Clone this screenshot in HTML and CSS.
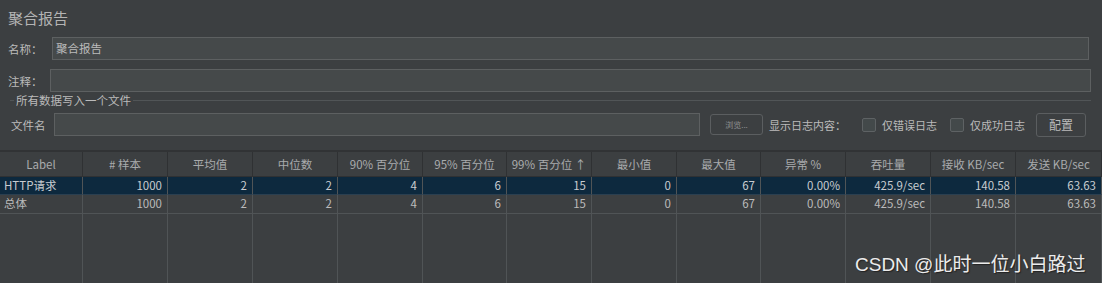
FILE: index.html
```html
<!DOCTYPE html>
<html lang="zh-CN">
<head>
    <meta charset="UTF-8">
    <title>聚合报告</title>
    <link rel="stylesheet" href="styles.css">
</head>
<body>
    <div class="panel">
        <div class="title">聚合报告</div>

        <div class="form-row name-row">
            <label>名称：</label>
            <div class="field">聚合报告</div>
        </div>
        <div class="form-row comment-row">
            <label>注释：</label>
            <div class="field"></div>
        </div>

        <!-- write results to file -->
        <div class="file-group">
            <div class="legend"><span>所有数据写入一个文件</span></div>
            <div class="file-row">
                <label>文件名</label>
                <div class="field file-field"></div>
                <button class="browse">浏览...</button>
                <span class="log-label">显示日志内容：</span>
                <span class="check err"><i></i>仅错误日志</span>
                <span class="check ok"><i></i>仅成功日志</span>
                <button class="config">配置</button>
            </div>
        </div>
    </div>

    <div class="table">
        <div class="th">Label</div>
        <div class="th"># 样本</div>
        <div class="th">平均值</div>
        <div class="th">中位数</div>
        <div class="th">90% 百分位</div>
        <div class="th">95% 百分位</div>
        <div class="th">99% 百分位 ↑</div>
        <div class="th">最小值</div>
        <div class="th">最大值</div>
        <div class="th">异常 %</div>
        <div class="th">吞吐量</div>
        <div class="th">接收 KB/sec</div>
        <div class="th">发送 KB/sec</div>

        <div class="td text selected">HTTP请求</div>
        <div class="td selected">1000</div>
        <div class="td selected">2</div>
        <div class="td selected">2</div>
        <div class="td selected">4</div>
        <div class="td selected">6</div>
        <div class="td selected">15</div>
        <div class="td selected">0</div>
        <div class="td selected">67</div>
        <div class="td selected">0.00%</div>
        <div class="td selected">425.9/sec</div>
        <div class="td selected">140.58</div>
        <div class="td selected">63.63</div>

        <div class="td text">总体</div>
        <div class="td">1000</div>
        <div class="td">2</div>
        <div class="td">2</div>
        <div class="td">4</div>
        <div class="td">6</div>
        <div class="td">15</div>
        <div class="td">0</div>
        <div class="td">67</div>
        <div class="td">0.00%</div>
        <div class="td">425.9/sec</div>
        <div class="td">140.58</div>
        <div class="td">63.63</div>

        <div class="fill"></div><div class="fill"></div><div class="fill"></div>
        <div class="fill"></div><div class="fill"></div><div class="fill"></div>
        <div class="fill"></div><div class="fill"></div><div class="fill"></div>
        <div class="fill"></div><div class="fill"></div><div class="fill"></div>
        <div class="fill"></div>
    </div>

    <div class="watermark">CSDN @此时一位小白路过</div>
</body>
</html>
```

FILE: styles.css
```css
body {
    margin: 0;
    width: 1102px;
    height: 283px;
    overflow: hidden;
    background-color: #3c3f41;
    color: #bbbbbb;
    font-family: "Noto Sans CJK SC", "DejaVu Sans", sans-serif;
    font-size: 11.5px;
    position: relative;
}
.panel {
    padding: 0 11px 0 8px;
    height: 150px;
    border-bottom: 2px solid #313335;
}
.title {
    height: 31px;
    line-height: 36px;
    font-size: 15px;
    color: #b4b4b4;
}
.form-row {
    display: flex;
    align-items: center;
    height: 23px;
}
.name-row {
    margin-top: 6px;
}
.comment-row {
    margin-top: 9px;
}
.name-row label {
    width: 44px;
}
.comment-row label {
    width: 42px;
}
.field {
    flex: 1;
    height: 23px;
    box-sizing: border-box;
    background-color: #45494a;
    border: 1px solid #5d6061;
    padding-left: 3px;
    line-height: 20px;
    color: #bbbbbb;
}
.name-row .field {
    margin-right: 2px;
}
.file-group {
    margin-top: 8px;
}
.legend {
    height: 12px;
    border-top: 1px solid #515557;
    margin: 6px 0 0 2px;
    position: relative;
}
.legend span {
    position: absolute;
    left: 4px;
    top: -9px;
    padding: 0 2px;
    background-color: #3c3f41;
    line-height: 16px;
}
.file-row {
    display: flex;
    align-items: center;
    height: 23px;
    padding-left: 3px;
    font-size: 11px;
    white-space: nowrap;
}
.file-row > * {
    flex: none;
}
.file-row label {
    width: 43px;
    font-size: 11.5px;
}
.file-field {
    width: 646px;
}
button {
    font-family: inherit;
    background-color: #3c3f41;
    border: 1px solid #5b5e60;
    border-radius: 3px;
    color: #bbbbbb;
    cursor: pointer;
}
.browse {
    width: 53px;
    height: 21px;
    margin-left: 10px;
    font-size: 8px;
    color: #8f9193;
    padding: 0;
}
.log-label {
    margin-left: 6px;
}
.check {
    display: flex;
    align-items: center;
}
.check.err {
    margin-left: 16px;
}
.check.ok {
    margin-left: 13px;
}
.check i {
    display: inline-block;
    width: 12px;
    height: 12px;
    border: 1px solid #5e6264;
    border-radius: 2px;
    background-color: #43494a;
    margin-right: 6px;
}
.config {
    width: 50px;
    height: 24px;
    margin-left: 11px;
    font-size: 12px;
    padding: 0;
}
.table {
    display: grid;
    grid-template-columns: 83px 85px 85px 85px 85px 84px 85px 85px 84px 85px 85px 85px 1fr;
    grid-template-rows: 25px 18px 19px 1fr;
    height: 131px;
}
.th {
    box-sizing: border-box;
    border-right: 1px solid #2f3133;
    border-bottom: 1px solid #2f3133;
    text-align: center;
    line-height: 24px;
    color: #a9abad;
    white-space: nowrap;
}
.td {
    box-sizing: border-box;
    border-right: 1px solid #505456;
    border-bottom: 1px solid #505456;
    text-align: right;
    padding-right: 5px;
    line-height: 17px;
    white-space: nowrap;
}
.td.text {
    text-align: left;
    padding-left: 4px;
    padding-right: 0;
}
.td.selected {
    background-color: #0d293e;
    border-bottom-color: #2a3f50;
    color: #c8ccd0;
}
.fill {
    border-right: 1px solid #505456;
}
.watermark {
    position: absolute;
    left: 855px;
    top: 249px;
    font-family: "Liberation Sans", "Noto Sans CJK SC", sans-serif;
    font-size: 19px;
    color: #ececec;
    text-shadow: 1px 1px 1px #222222;
}
```
